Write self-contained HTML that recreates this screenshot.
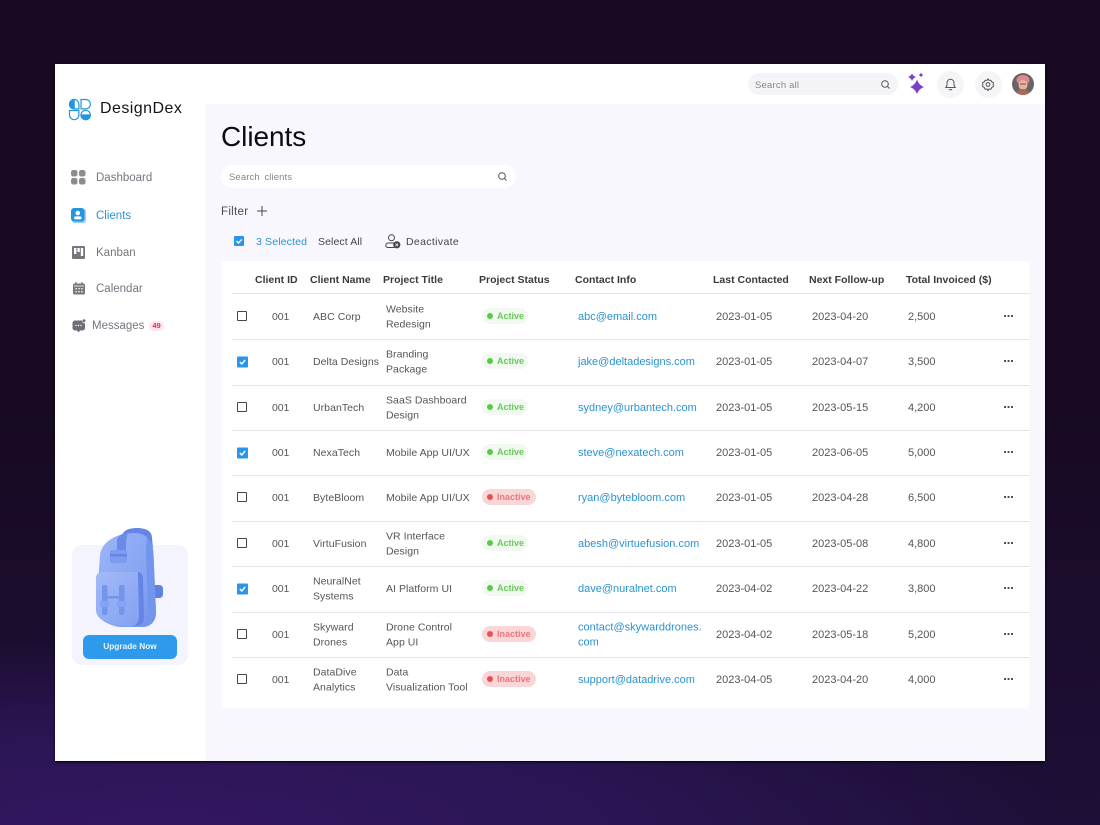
<!DOCTYPE html>
<html lang="en">
<head>
<meta charset="utf-8">
<title>Clients</title>
<style>
html,body{margin:0;padding:0;width:1100px;height:825px;overflow:hidden;background:#170a22}
body{position:relative;font-family:"Liberation Sans",sans-serif}
#bg{position:absolute;inset:0;background:radial-gradient(ellipse 900px 190px at 15% 100%,#331660 0%,#2b1656 45%,rgba(32,16,60,0) 100%),linear-gradient(180deg,#170a22 0%,#170a22 50%,#1e0f38 100%)}
#panel{position:absolute;left:55px;top:64px;width:990px;height:697px;background:#fff;box-shadow:0 1px 2px #000}
#main{position:absolute;left:205px;top:104px;width:840px;height:657px;background:#f8f7fd}
#card{position:absolute;left:221px;top:261px;width:808px;height:447px;background:#fff;border-radius:4px}
.t{position:absolute;white-space:nowrap;transform:translateY(calc(-50% + 1px));font-size:10.5px;letter-spacing:.05px;color:#555;line-height:14.5px}
.d{font-size:11px;letter-spacing:0}
.n{font-size:10.5px;letter-spacing:-.1px}
.h{font-weight:bold;color:#3a3a3f;font-size:10.5px;letter-spacing:0}
.e{color:#2b93cf;font-size:11px;letter-spacing:0}
.line{position:absolute;left:232px;width:797px;height:1px;background:#e4e4e8}
.box{position:absolute;left:237px;width:8px;height:8px;border:1.5px solid #45454a;border-radius:1px;transform:translateY(-50%);background:#fff}
.chk{position:absolute;left:237px;width:11px;height:11px;background:#2b96e8;border-radius:1px;transform:translateY(-50%)}
.chk svg{display:block}
.badge{position:absolute;left:482px;height:16px;border-radius:8px;transform:translateY(-50%);font-size:9px;font-weight:bold;line-height:17px;padding-left:15px;box-sizing:border-box;letter-spacing:0}
.badge:before{content:"";position:absolute;left:5px;top:5px;width:6px;height:6px;border-radius:50%}
.a{width:46px;background:#f2f9f0;color:#66c95a}
.a:before{background:#58c948}
.i{width:54px;background:#fbd6d8;color:#e9777a}
.i:before{background:#ec4f52}
.dots{position:absolute;left:1004px;width:9px;height:2px;transform:translateY(-50%);background:radial-gradient(circle at 1px 1px,#444 1px,transparent 1.2px) 0 0/3.5px 2px repeat-x}
.nav{color:#77757e;font-size:11.5px;letter-spacing:0}
svg{position:absolute;overflow:visible}
</style>
</head>
<body>
<div id="bg"></div>
<div id="panel"></div>
<div id="main"></div>
<div id="card"></div>

<!-- Logo -->
<svg style="left:68px;top:98px" width="24" height="23" viewBox="0 0 24 23" fill="none" stroke="#2596dc" stroke-width="1.2">
<path d="M1.500 6.200a4.700 4.700 0 0 1 9.400 0v4.700H6.200a4.700 4.700 0 0 1-4.700-4.700z" fill="#fff"/>
<path d="M6.200 1.500a4.700 4.700 0 0 0-4.700 4.700 4.700 4.700 0 0 0 4.700 4.700z" fill="#2596dc"/>
<path d="M13 1.500h4.700a4.700 4.700 0 0 1 0 9.400H13z"/>
<path d="M1.500 12.500h9.400v4.500a4.700 4.700 0 0 1-4.700 4.700 4.700 4.700 0 0 1-4.700-4.700z"/>
<circle cx="17.700" cy="17" r="4.700"/>
<path d="M13 17a4.700 4.700 0 0 0 9.400 0z" fill="#2596dc"/>
</svg>
<div class="t" style="left:100px;top:108px;font-size:16px;letter-spacing:.45px;color:#14141c">DesignDex</div>

<!-- Sidebar -->
<svg style="left:71px;top:170px" width="15" height="15"><rect width="6.500" height="6.500" rx="2.200" fill="#8c8b92"/><rect x="8" width="6.500" height="6.500" rx="2.200" fill="#8c8b92"/><rect y="8" width="6.500" height="6.500" rx="2.200" fill="#8c8b92"/><rect x="8" y="8" width="6.500" height="6.500" rx="2.200" fill="#8c8b92"/></svg>
<div class="t nav" style="left:96px;top:177px">Dashboard</div>

<svg style="left:71px;top:208px" width="15" height="15"><rect x="1" y="1" width="14" height="14" rx="3" fill="#8fd0f5"/><rect width="13.500" height="13.500" rx="3" fill="#2196e0"/><circle cx="6.800" cy="5" r="2.300" fill="#fff"/><rect x="3" y="8.400" width="7.600" height="3" rx="1.500" fill="#fff"/></svg>
<div class="t nav" style="left:96px;top:215px;color:#2b93cf">Clients</div>

<svg style="left:72px;top:246px" width="13" height="13"><rect width="13" height="13" rx="1" fill="#77757e"/><rect x="2" y="2" width="2.400" height="6" fill="#fff"/><rect x="5.400" y="2" width="2.400" height="4" fill="#fff"/><rect x="8.800" y="2" width="2.400" height="8" fill="#fff"/></svg>
<div class="t nav" style="left:96px;top:252px">Kanban</div>

<svg style="left:73px;top:282px" width="12" height="13"><rect y="1.500" width="12" height="11" rx="1.500" fill="#77757e"/><rect x="2.400" width="1.300" height="3" fill="#77757e"/><rect x="8.300" width="1.300" height="3" fill="#77757e"/><rect x="1" y="3.600" width="10" height=".8" fill="#fff"/><g fill="#fff"><rect x="2.400" y="6" width="1.400" height="1.400"/><rect x="5.300" y="6" width="1.400" height="1.400"/><rect x="8.200" y="6" width="1.400" height="1.400"/><rect x="2.400" y="9" width="1.400" height="1.400"/><rect x="5.300" y="9" width="1.400" height="1.400"/><rect x="8.200" y="9" width="1.400" height="1.400"/></g></svg>
<div class="t nav" style="left:96px;top:288px">Calendar</div>

<svg style="left:72px;top:319px" width="14" height="14"><path d="M3 1.500h7a3 3 0 0 0 3 3V9a2.500 2.500 0 0 1-2.500 2.500H8L6.500 13.500 5 11.500H3A2.500 2.500 0 0 1 .5 9V4A2.500 2.500 0 0 1 3 1.500z" fill="#6f6d76"/><circle cx="12" cy="1.800" r="1.500" fill="#6f6d76"/><g fill="#fff"><circle cx="4" cy="6.500" r=".7"/><circle cx="6.500" cy="6.500" r=".7"/><circle cx="9" cy="6.500" r=".7"/></g></svg>
<div class="t nav" style="left:92px;top:325px">Messages</div>
<div style="position:absolute;left:149px;top:321px;width:15px;height:10px;border-radius:5px;background:#fbe6ec;color:#c8385f;font-size:7.500px;font-weight:bold;line-height:10px;text-align:center">49</div>

<!-- Upgrade card -->
<div style="position:absolute;left:72px;top:545px;width:116px;height:120px;border-radius:10px;background:#f3f4fe"></div>
<svg style="left:0;top:0" width="1100" height="825" viewBox="0 0 1100 825">
<defs>
<linearGradient id="bp" x1="0" y1="0" x2="1" y2="1"><stop offset="0" stop-color="#9db6f7"/><stop offset=".7" stop-color="#83a1f2"/><stop offset="1" stop-color="#6f90ea"/></linearGradient>
<linearGradient id="pk" x1="0" y1="0" x2="1" y2="1"><stop offset="0" stop-color="#a3baf8"/><stop offset="1" stop-color="#829ff1"/></linearGradient>
</defs>
<path d="M122 537c0-6 6-9 15-9 9 0 15 3 15 10l1 10h-31z" fill="#6485e6"/>
<path d="M150 585h9c3 0 4 2 4 4v5c0 3-2 4-4 4h-9z" fill="#5f82e2"/>
<path d="M100 556C101 542 116 533 134 533 148 533 153 542 153.500 554L156 612C156 622 150 627 142 627L120 627C106 625 97 618 96 610Z" fill="url(#bp)"/>
<path d="M147 537c4 4 6 10 6.500 17l2.500 58c0 10-6 15-14 15h-4c6-2 10-7 10-14l-2-62c0-6 .5-10 1-14z" fill="#7495ec"/>
<path d="M117 539c2-4 6-6 10-6 1 2-1 5-1 9v10h-9z" fill="#6a8ce8"/>
<rect x="110" y="550" width="17" height="13" rx="2" fill="#7d9cef"/>
<rect x="110" y="554" width="17" height="2.500" fill="#6485e6"/>
<path d="M96 578c0-4 3-6 6-6h35c4 0 6 3 6 7l1 38c0 6-3 9-8 9h-10c-10 0-29-4-30-15z" fill="url(#pk)"/>
<path d="M138 572c3 0 5 3 5 7l1 38c0 6-3 9-8 9h-3c4-1 6-5 6-10l-1-39c0-2 0-4 0-5z" fill="#6485e6"/>
<rect x="102" y="596" width="23" height="2.500" fill="#7495ec"/>
<rect x="102" y="585" width="5.500" height="30" rx="2" fill="#7495ec"/>
<rect x="119" y="585" width="5.500" height="30" rx="2" fill="#7495ec"/>
<rect x="100" y="601" width="9.500" height="6" rx="1.500" fill="#86a3f1"/>
<rect x="117" y="601" width="9.500" height="6" rx="1.500" fill="#86a3f1"/>
</svg>
<div style="position:absolute;left:83px;top:635px;width:94px;height:24px;border-radius:6px;background:#2e9aec;color:#e8f5ff;font-size:8.300px;font-weight:bold;line-height:23px;text-align:center;letter-spacing:0">Upgrade Now</div>

<!-- Top bar -->
<div style="position:absolute;left:748px;top:73px;width:150px;height:22px;border-radius:11px;background:#f4f4f8"></div>
<div class="t" style="left:755px;top:85px;font-size:9.500px;color:#85858b;letter-spacing:.2px">Search all</div>
<svg style="left:881px;top:80px" width="9" height="9" fill="none" stroke="#55555a" stroke-width="1"><circle cx="4" cy="4" r="3.300"/><path d="M6.500 6.500 8.500 8.500"/></svg>
<svg style="left:905px;top:72px" width="24" height="24" viewBox="905 72 24 24" fill="#7a3fc9">
<path d="M917 79.500Q918.800 85.200 924 87 918.800 88.800 917 94 915.200 88.800 910 87 915.200 85.200 917 79.500z"/>
<path d="M912 73.500Q913 76 916 77 913 78 912 81 911 78 908 77 911 76 912 73.500z"/>
<path d="M921 72.500Q921.600 74.400 923.500 75 921.600 75.600 921 77.500 920.400 75.600 918.500 75 920.400 74.400 921 72.500z"/>
</svg>
<div style="position:absolute;left:937px;top:71px;width:27px;height:27px;border-radius:50%;background:#f5f5f8"></div>
<svg style="left:945px;top:78px" width="11" height="13" fill="none" stroke="#55555a" stroke-width="1"><path d="M5.500 1.200C3.300 1.200 2 3 2 5v2.300L.8 9.500h9.400L9 7.300V5c0-2-1.300-3.800-3.500-3.800z"/><path d="M4 11c.3 1.100 2.700 1.100 3 0"/></svg>
<div style="position:absolute;left:975px;top:71px;width:27px;height:27px;border-radius:50%;background:#f5f5f8"></div>
<svg style="left:982px;top:78px" width="12" height="13" viewBox="0 0 12 13" fill="none" stroke="#55555a" stroke-width="1"><path d="M6 .8l1 1.600 1.900-.1.900 1.700 1.700.800-.4 1.900.4 1.900-1.700.800-.9 1.700-1.900-.1-1 1.600-1-1.600-1.900.1-.9-1.700-1.700-.8.400-1.900-.4-1.900 1.700-.8.900-1.700 1.900.1z" stroke-linejoin="round"/><circle cx="6" cy="6.500" r="1.900"/></svg>
<svg style="left:1012px;top:73px" width="22" height="22" viewBox="0 0 22 22">
<defs><clipPath id="av"><circle cx="11" cy="11" r="11"/></clipPath></defs>
<g clip-path="url(#av)"><rect width="22" height="22" fill="#6a6467"/><ellipse cx="11" cy="7" rx="6.500" ry="5" fill="#d98a94"/><ellipse cx="11" cy="12" rx="4.500" ry="5" fill="#e6b39c"/><path d="M4 22c1-5 4-6 7-6s6 1 7 6z" fill="#a5695e"/><rect x="8" y="10.500" width="6" height="1" fill="#7c4f4a"/></g>
</svg>

<!-- Heading -->
<div class="t" style="left:221px;top:136px;font-size:28px;letter-spacing:-.05px;color:#0c0c12">Clients</div>
<div style="position:absolute;left:221px;top:165px;width:295px;height:23px;border-radius:11px;background:#fff"></div>
<div class="t" style="left:229px;top:177px;font-size:9.500px;color:#85858b;letter-spacing:.1px;word-spacing:2px">Search clients</div>
<svg style="left:498px;top:172px" width="9" height="9" fill="none" stroke="#55555a" stroke-width="1"><circle cx="4" cy="4" r="3.300"/><path d="M6.500 6.500 8.500 8.500"/></svg>
<div class="t" style="left:221px;top:211px;font-size:11.500px;color:#4a4a50;letter-spacing:.3px">Filter</div>
<svg style="left:257px;top:206px" width="10" height="10" stroke="#45454a" stroke-width="1"><path d="M5 0v10M0 5h10"/></svg>

<div class="chk" style="left:234px;top:241px;width:10px;height:10px"><svg width="10" height="10" fill="none" stroke="#fff" stroke-width="1.300"><path d="M2.500 5l2 2 3.200-3.600"/></svg></div>
<div class="t" style="left:256px;top:241px;color:#2b93cf;font-size:10.500px;letter-spacing:.15px">3 Selected</div>
<div class="t" style="left:318px;top:241px;color:#45454a;font-size:10.500px;letter-spacing:.1px">Select All</div>
<svg style="left:385px;top:234px" width="16" height="15" fill="none" stroke="#45454a" stroke-width="1"><circle cx="6.500" cy="3.800" r="3"/><rect x=".8" y="9" width="10" height="4.500" rx="2.200"/><circle cx="11.800" cy="10.800" r="3.600" fill="#45454a" stroke="none"/><path d="M10.500 9.500l2.600 2.600M13.100 9.500l-2.600 2.600" stroke="#fff" stroke-width=".8"/></svg>
<div class="t" style="left:406px;top:241px;color:#45454a;font-size:10.500px;letter-spacing:.35px">Deactivate</div>

<!-- Table header -->
<div class="t h" style="left:255px;top:279px">Client ID</div>
<div class="t h" style="left:310px;top:279px">Client Name</div>
<div class="t h" style="left:383px;top:279px">Project Title</div>
<div class="t h" style="left:479px;top:279px">Project Status</div>
<div class="t h" style="left:575px;top:279px">Contact Info</div>
<div class="t h" style="left:713px;top:279px">Last Contacted</div>
<div class="t h" style="left:809px;top:279px">Next Follow-up</div>
<div class="t h" style="left:906px;top:279px">Total Invoiced ($)</div>

<div class="line" style="top:293px"></div>
<div class="line" style="top:339px"></div>
<div class="line" style="top:385px"></div>
<div class="line" style="top:430px"></div>
<div class="line" style="top:475px"></div>
<div class="line" style="top:521px"></div>
<div class="line" style="top:566px"></div>
<div class="line" style="top:612px"></div>
<div class="line" style="top:657px"></div>

<!-- Row 1 -->
<div class="box" style="top:316px"></div>
<div class="t n" style="left:272px;top:316px">001</div>
<div class="t" style="left:313px;top:316px">ABC Corp</div>
<div class="t" style="left:386px;top:316px">Website<br>Redesign</div>
<div class="badge a" style="top:316px">Active</div>
<div class="t e" style="left:578px;top:316px">abc@email.com</div>
<div class="t d" style="left:716px;top:316px">2023-01-05</div>
<div class="t d" style="left:812px;top:316px">2023-04-20</div>
<div class="t d" style="left:908px;top:316px">2,500</div>
<div class="dots" style="top:316px"></div>

<!-- Row 2 -->
<div class="chk" style="top:362px"><svg width="11" height="11" fill="none" stroke="#fff" stroke-width="1.400"><path d="M2.800 5.500l2 2 3.400-4"/></svg></div>
<div class="t n" style="left:272px;top:361px">001</div>
<div class="t" style="left:313px;top:361px">Delta Designs</div>
<div class="t" style="left:386px;top:361px">Branding<br>Package</div>
<div class="badge a" style="top:361px">Active</div>
<div class="t e" style="left:578px;top:361px">jake@deltadesigns.com</div>
<div class="t d" style="left:716px;top:361px">2023-01-05</div>
<div class="t d" style="left:812px;top:361px">2023-04-07</div>
<div class="t d" style="left:908px;top:361px">3,500</div>
<div class="dots" style="top:361px"></div>

<!-- Row 3 -->
<div class="box" style="top:407px"></div>
<div class="t n" style="left:272px;top:407px">001</div>
<div class="t" style="left:313px;top:407px">UrbanTech</div>
<div class="t" style="left:386px;top:407px">SaaS Dashboard<br>Design</div>
<div class="badge a" style="top:407px">Active</div>
<div class="t e" style="left:578px;top:407px">sydney@urbantech.com</div>
<div class="t d" style="left:716px;top:407px">2023-01-05</div>
<div class="t d" style="left:812px;top:407px">2023-05-15</div>
<div class="t d" style="left:908px;top:407px">4,200</div>
<div class="dots" style="top:407px"></div>

<!-- Row 4 -->
<div class="chk" style="top:453px"><svg width="11" height="11" fill="none" stroke="#fff" stroke-width="1.400"><path d="M2.800 5.500l2 2 3.400-4"/></svg></div>
<div class="t n" style="left:272px;top:452px">001</div>
<div class="t" style="left:313px;top:452px">NexaTech</div>
<div class="t" style="left:386px;top:452px">Mobile App UI/UX</div>
<div class="badge a" style="top:452px">Active</div>
<div class="t e" style="left:578px;top:452px">steve@nexatech.com</div>
<div class="t d" style="left:716px;top:452px">2023-01-05</div>
<div class="t d" style="left:812px;top:452px">2023-06-05</div>
<div class="t d" style="left:908px;top:452px">5,000</div>
<div class="dots" style="top:452px"></div>

<!-- Row 5 -->
<div class="box" style="top:497px"></div>
<div class="t n" style="left:272px;top:497px">001</div>
<div class="t" style="left:313px;top:497px">ByteBloom</div>
<div class="t" style="left:386px;top:497px">Mobile App UI/UX</div>
<div class="badge i" style="top:497px">Inactive</div>
<div class="t e" style="left:578px;top:497px">ryan@bytebloom.com</div>
<div class="t d" style="left:716px;top:497px">2023-01-05</div>
<div class="t d" style="left:812px;top:497px">2023-04-28</div>
<div class="t d" style="left:908px;top:497px">6,500</div>
<div class="dots" style="top:497px"></div>

<!-- Row 6 -->
<div class="box" style="top:543px"></div>
<div class="t n" style="left:272px;top:543px">001</div>
<div class="t" style="left:313px;top:543px">VirtuFusion</div>
<div class="t" style="left:386px;top:543px">VR Interface<br>Design</div>
<div class="badge a" style="top:543px">Active</div>
<div class="t e" style="left:578px;top:543px">abesh@virtuefusion.com</div>
<div class="t d" style="left:716px;top:543px">2023-01-05</div>
<div class="t d" style="left:812px;top:543px">2023-05-08</div>
<div class="t d" style="left:908px;top:543px">4,800</div>
<div class="dots" style="top:543px"></div>

<!-- Row 7 -->
<div class="chk" style="top:589px"><svg width="11" height="11" fill="none" stroke="#fff" stroke-width="1.400"><path d="M2.800 5.500l2 2 3.400-4"/></svg></div>
<div class="t n" style="left:272px;top:588px">001</div>
<div class="t" style="left:313px;top:588px">NeuralNet<br>Systems</div>
<div class="t" style="left:386px;top:588px">AI Platform UI</div>
<div class="badge a" style="top:588px">Active</div>
<div class="t e" style="left:578px;top:588px">dave@nuralnet.com</div>
<div class="t d" style="left:716px;top:588px">2023-04-02</div>
<div class="t d" style="left:812px;top:588px">2023-04-22</div>
<div class="t d" style="left:908px;top:588px">3,800</div>
<div class="dots" style="top:588px"></div>

<!-- Row 8 -->
<div class="box" style="top:634px"></div>
<div class="t n" style="left:272px;top:634px">001</div>
<div class="t" style="left:313px;top:634px">Skyward<br>Drones</div>
<div class="t" style="left:386px;top:634px">Drone Control<br>App UI</div>
<div class="badge i" style="top:634px">Inactive</div>
<div class="t e" style="left:578px;top:634px">contact@skywarddrones.<br>com</div>
<div class="t d" style="left:716px;top:634px">2023-04-02</div>
<div class="t d" style="left:812px;top:634px">2023-05-18</div>
<div class="t d" style="left:908px;top:634px">5,200</div>
<div class="dots" style="top:634px"></div>

<!-- Row 9 -->
<div class="box" style="top:679px"></div>
<div class="t n" style="left:272px;top:679px">001</div>
<div class="t" style="left:313px;top:679px">DataDive<br>Analytics</div>
<div class="t" style="left:386px;top:679px">Data<br>Visualization Tool</div>
<div class="badge i" style="top:679px">Inactive</div>
<div class="t e" style="left:578px;top:679px">support@datadrive.com</div>
<div class="t d" style="left:716px;top:679px">2023-04-05</div>
<div class="t d" style="left:812px;top:679px">2023-04-20</div>
<div class="t d" style="left:908px;top:679px">4,000</div>
<div class="dots" style="top:679px"></div>
</body>
</html>
